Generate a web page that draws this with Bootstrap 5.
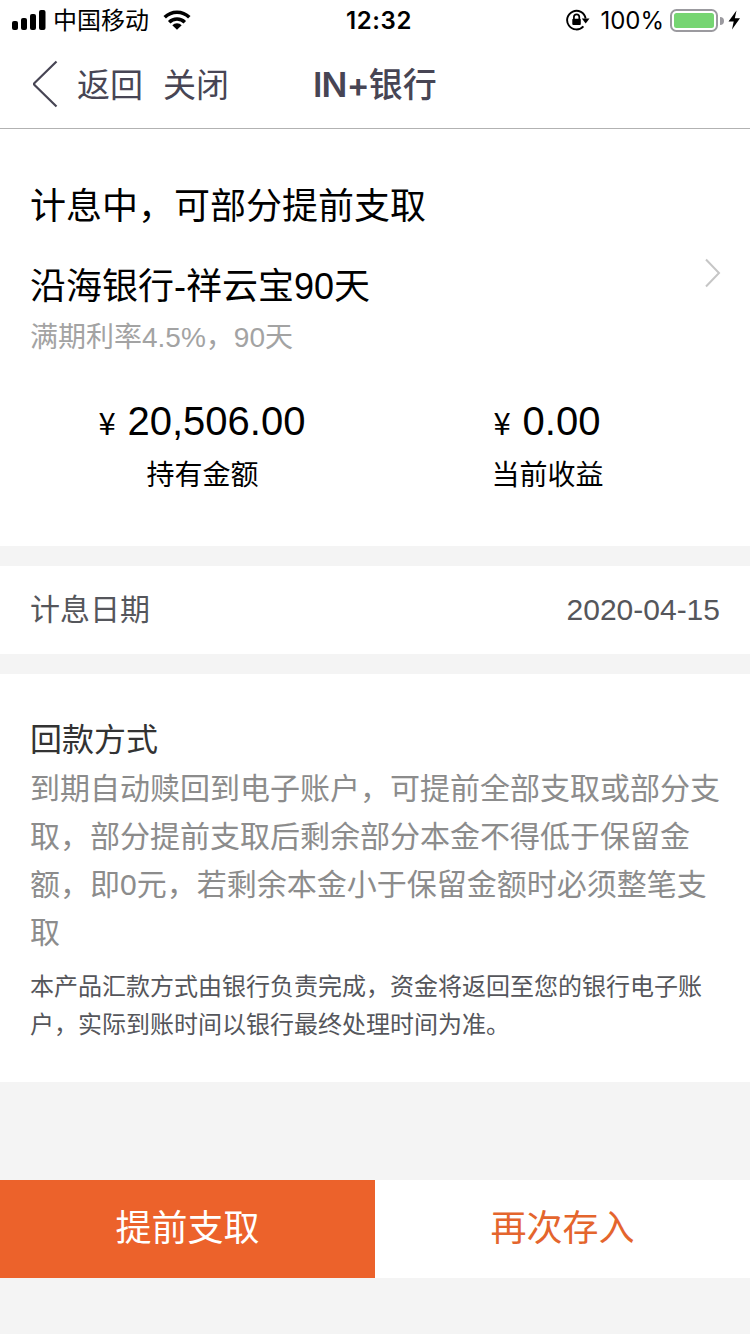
<!DOCTYPE html>
<html lang="zh-CN">
<head>
<meta charset="utf-8">
<meta name="viewport" content="width=device-width, initial-scale=1">
<title>IN+银行</title>
<link rel="stylesheet" href="https://cdn.jsdelivr.net/npm/bootstrap@5.3.0/dist/css/bootstrap.min.css">
<style>
  body { font-family: "Liberation Sans", "Noto Sans CJK SC", sans-serif; background: #f4f4f4; color: #000; min-height: 1334px; }
  svg { display: block; flex: none; }
  .status { height: 40px; padding: 0 9px 0 12px; font-family: Inter, "Noto Sans CJK SC", sans-serif; font-size: 24px; line-height: 40px; }
  .status > div { flex: 1 1 0; }
  .status span { padding-top: 2px; }
  .carrier { margin-left: 7px; }
  .wifi { margin-left: 14px; }
  .clock { font-weight: 600; letter-spacing: .6px; margin-left: 5px; }
  .percent { letter-spacing: 0; margin-left: 10px; }
  .battery { margin-left: 6px; }
  .topbar { height: 89px; border-bottom: 1px solid #b2b2b2; color: #474554; font-size: 33px; line-height: 88px; padding-left: 32px; }
  .topbar a { color: inherit; }
  .back { margin-left: 18px; padding-top: 3px; }
  .close-link { margin-left: 20px; padding-top: 3px; }
  .title { font-family: Inter, "Noto Sans CJK SC", sans-serif; font-weight: 600; font-size: 34px; letter-spacing: -.8px; margin-left: 84px; padding-top: 1px; }
  .title span { font-weight: 500; letter-spacing: 0; }
  .summary { height: 417px; padding: 53px 30px 0; }
  .product { margin-top: 30px; }
  .head { font-size: 36px; line-height: 50px; }
  .rate { font-size: 28px; line-height: 40px; color: #a3a3a3; margin-top: 6px; }
  .chevron { margin: -4px -1px 0 0; }
  .amounts { margin-top: 35px; }
  .money { font-size: 40px; line-height: 56px; padding-right: 1px; }
  .yen { display: inline-block; width: 29px; text-align: left; font-family: "Noto Sans CJK SC", sans-serif; font-size: 31px; line-height: 1; }
  .caption-text { font-size: 28px; line-height: 40px; margin-top: 7px; }
  .date-row { height: 88px; margin-top: 20px; padding: 0 30px; font-size: 30px; line-height: 88px; color: #55565b; }
  .payback { height: 408px; margin-top: 20px; padding: 43px 30px 0; }
  .payback h2 { font-size: 32px; line-height: 46px; font-weight: 400; color: #333; }
  .desc { font-size: 30px; line-height: 48px; color: #8c8c8c; padding-top: 2px; }
  .note { font-size: 24px; line-height: 38px; color: #55565b; padding-top: 11px; }
  .actions { margin-top: 98px; height: 98px; }
  .actions .btn { font-size: 36px; line-height: 98px; }
  .btn-out { background: #ec622b; color: #fff; }
  .btn-in { background: #fff; color: #e4652d; }
</style>
</head>
<body>
<header class="bg-white">
  <div class="status d-flex align-items-center">
    <div class="d-flex align-items-center">
      <svg width="34" height="40" viewBox="0 0 34 40"><rect y="21" width="6" height="9" rx="2"/><rect x="9" y="18" width="6" height="12" rx="2"/><rect x="18" y="14" width="6" height="16" rx="2"/><rect x="27" y="10" width="6.500" height="20" rx="2"/></svg>
      <span class="carrier">中国移动</span>
      <svg class="wifi" width="30" height="40" viewBox="0 0 30 40"><g fill="none" stroke="#000" stroke-width="3.500"><path d="M1.700 17.300a17.500 17.500 0 0 1 24.600 0"/><path d="M6.200 22.300a11 11 0 0 1 15.600 0"/></g><path d="M14 29.800 9.300 25.300a6.600 6.600 0 0 1 9.400 0z"/></svg>
    </div>
    <span class="clock">12:32</span>
    <div class="d-flex align-items-center justify-content-end">
      <svg width="24" height="40" viewBox="0 0 24 40"><path d="M17.400 26.300A9.300 9.300 0 1 1 19.600 18.500" fill="none" stroke="#000" stroke-width="1.900"/><path d="M15.800 18.500h7.700l-3.800 5z"/><rect x="6.300" y="18.700" width="8.500" height="6.300" rx="1"/><path d="M7.900 19v-2a2.700 2.700 0 0 1 5.400 0v2" fill="none" stroke="#000" stroke-width="1.700"/></svg>
      <span class="percent">100%</span>
      <svg class="battery" width="71" height="40" viewBox="0 0 71 40"><rect x="1" y="10" width="46" height="21" rx="5.500" fill="#fff" stroke="#9b9a9f" stroke-width="2"/><rect x="4" y="13" width="40" height="15" rx="2.500" fill="#76d572"/><path d="M50 17a4 4 0 0 1 0 8z" fill="#9b9a9f"/><path d="M66.500 10.500 58.500 21.500h5.200L62 29.500l8-11.300h-5.200z"/></svg>
    </div>
  </div>
  <nav class="topbar d-flex align-items-center">
    <a href="#" class="d-flex align-items-center text-decoration-none">
      <svg width="27" height="48" viewBox="0 0 27 48"><path d="M24.500 1.500 2.500 23q-1 1 0 2l22 21.500" fill="none" stroke="#474554" stroke-width="2.200"/></svg>
      <span class="back">返回</span>
    </a>
    <a href="#" class="text-decoration-none close-link">关闭</a>
    <div class="title">IN+<span>银行</span></div>
  </nav>
</header>
<main>
  <section class="summary bg-white">
    <div class="head">计息中，可部分提前支取</div>
    <div class="d-flex justify-content-between product">
      <div>
        <div class="head">沿海银行-祥云宝90天</div>
        <div class="rate">满期利率4.5%，90天</div>
      </div>
      <svg class="chevron" width="16" height="30" viewBox="0 0 16 30"><path d="M1 1.500 14 15 1 28.500" fill="none" stroke="#c6c6c6" stroke-width="2"/></svg>
    </div>
    <div class="row g-0 text-center amounts">
      <div class="col-6"><div class="money"><span class="yen">¥</span>20,506.00</div><div class="caption-text">持有金额</div></div>
      <div class="col-6"><div class="money"><span class="yen">¥</span>0.00</div><div class="caption-text">当前收益</div></div>
    </div>
  </section>
  <section class="date-row bg-white d-flex justify-content-between"><span>计息日期</span><span>2020-04-15</span></section>
  <section class="payback bg-white">
    <h2 class="mb-0">回款方式</h2>
    <p class="desc mb-0">到期自动赎回到电子账户，可提前全部支取或部分支取，部分提前支取后剩余部分本金不得低于保留金额，即0元，若剩余本金小于保留金额时必须整笔支取</p>
    <p class="note mb-0">本产品汇款方式由银行负责完成，资金将返回至您的银行电子账户，实际到账时间以银行最终处理时间为准。</p>
  </section>
</main>
<footer class="actions row g-0">
  <button type="button" class="btn btn-out col-6 rounded-0 border-0 p-0">提前支取</button>
  <button type="button" class="btn btn-in col-6 rounded-0 border-0 p-0">再次存入</button>
</footer>
<script src="https://cdn.jsdelivr.net/npm/bootstrap@5.3.0/dist/js/bootstrap.bundle.min.js"></script>
</body>
</html>
